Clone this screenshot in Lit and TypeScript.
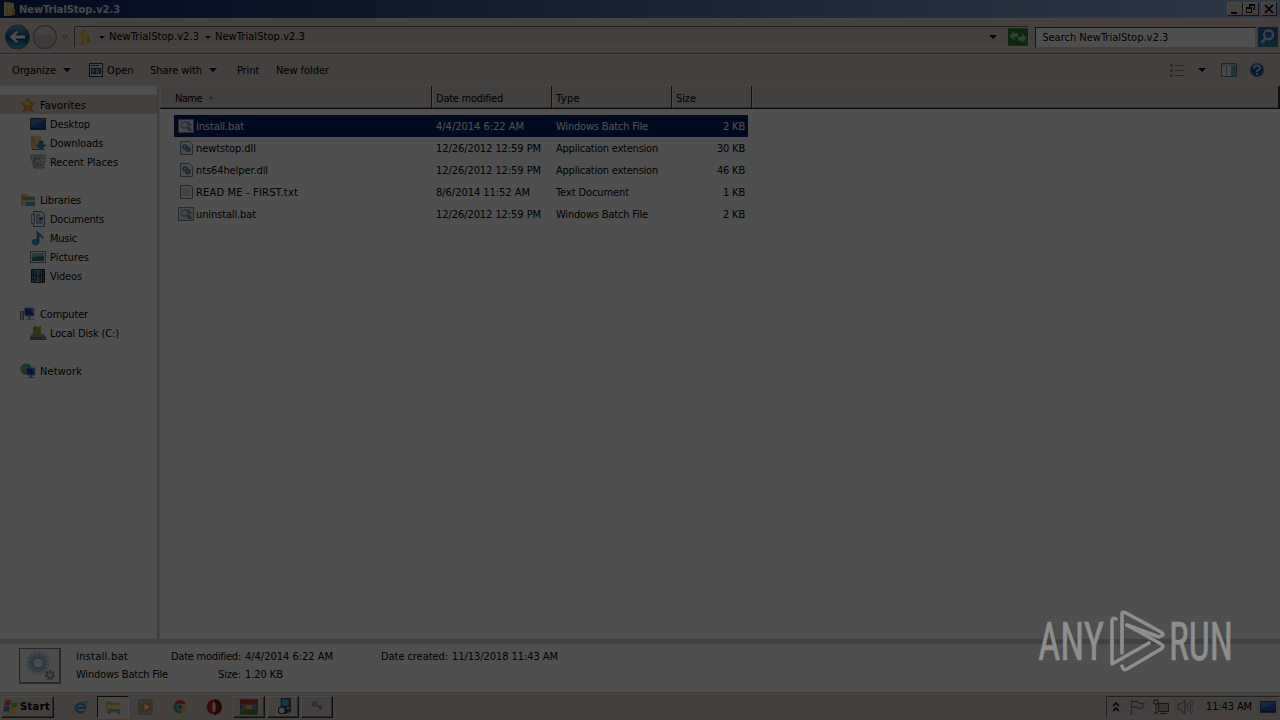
import { LitElement, html, css, svg } from 'lit';
import type { SVGTemplateResult } from 'lit';
import { customElement, property } from 'lit/decorators.js';

// 16x16 shell icons
const icons: Record<string, SVGTemplateResult> = {
  folder: svg`<path d="M3 1h6l1 1v13H3z" fill="#c5a748"/><path d="M7 2h6v12l-5 1-1-2z" fill="#dfc975"/><path d="M3 1h3v13l-3 1z" fill="#e0ce85"/><path d="M11 8h3v6h-3z" fill="#c4a03e"/>`,
  star: svg`<path d="M8 1l2.1 4.6 5 .6-3.7 3.4 1 5L8 12.1l-4.4 2.5 1-5L.9 6.2l5-.6z" fill="#f0a72c" stroke="#b3701a" stroke-width=".8"/><path d="M8 3l1.4 3.4L8 9 4 7z" fill="#ffd567"/>`,
  desktop: svg`<rect x=".5" y="2.5" width="15" height="11" fill="#2456b5" stroke="#384763"/><path d="M1 9c5 1 9-4 14-5V3H1z" fill="#3f7fc4"/><path d="M1 12h14v1H1z" fill="#152a58"/>`,
  downloads: svg`<path d="M1 1h6v13H1z" fill="#e0bd60"/><path d="M5 1h6v13l-6 1z" fill="#e9d48a"/><path d="M9 6h4v4h3l-5 5-5-5h3z" fill="#2e8bc0" stroke="#1a5f8d" stroke-width=".6"/><path d="M2 14h13v1H2z" fill="#3d7c9d"/>`,
  recent: svg`<path d="M1 1h8v5H4l2 8H4L2 6H1z" fill="#ccd3d6" stroke="#71838b" stroke-width=".8"/><path d="M5 5h9v9H5z" fill="#cbd3d6" stroke="#71838b" stroke-width=".8"/><path d="M10 1h5v7h-5z" fill="#e2e5e6" stroke="#71838b" stroke-width=".8"/><path d="M6 9h3M6 11h6M11 4h3M3 4h4" stroke="#536b78"/>`,
  libraries: svg`<path d="M1 2h6l1 2h6v9H1z" fill="#dcb95a"/><path d="M3 5h12v7H3z" fill="#5fa9b3"/><path d="M2 8h13l-1 6H1z" fill="#e4cd80"/><path d="M6 10h9v4H6z" fill="#57a0ba"/>`,
  documents: svg`<path d="M3.500 .5h8l3 3v12h-11z" fill="#eef4f8" stroke="#5f7686"/><path d="M1.500 3.500h3v9h-3z" fill="#dce9f2" stroke="#7f95a5"/><path d="M6 4h4M6 6h3M6 8h2M6 10h6M6 12h6" stroke="#4d6d88"/><path d="M9 6h4v3H9z" fill="#436b99"/>`,
  music: svg`<path d="M7 1c1 3 6 3 6 8-1-2-2-3-4-3v6a3.500 3 0 1 1-2-2.500z" fill="#2f84c9" stroke="#195a94" stroke-width=".6"/><circle cx="5" cy="12" r="3" fill="#36a1dc"/>`,
  pictures: svg`<rect x=".5" y="2.500" width="15" height="11" fill="#f1f5f6" stroke="#75848c"/><path d="M2 4h12v8H2z" fill="#78bade"/><path d="M2 9c4-2 7-1 12-2v5H2z" fill="#2f766e"/>`,
  videos: svg`<rect x="1" y="1" width="14" height="14" fill="#1e2833"/><path d="M4 2h8v5H4zM4 8h8v6H4z" fill="#6f9ec0"/><path d="M2.500 2v13M13.500 2v13" stroke="#b4c0c8" stroke-dasharray="1 1"/><path d="M5 3h2v4h2V3h2v10H9V9H7v4H5z" fill="#315a7b"/>`,
  computer: svg`<path d="M.5 5.500h3v8h-3z" fill="#b7c3cc" stroke="#68777f"/><path d="M4 2h10v8H5z" fill="#1c3fae" stroke="#a8b6cb"/><path d="M10 3h4v6z" fill="#6290dc"/><path d="M8 10h3v3H8zM6 13h8v1H6z" fill="#a9b3b8"/>`,
  disk: svg`<path d="M2 9h12l2 3v3H0v-3z" fill="#8d9c98"/><path d="M0 12h16v3H0z" fill="#5c706a"/><path d="M3 2c3-2 5 1 8-1v8c-3 2-5-1-8 1z" fill="#a8a838"/><path d="M3 2c2-1 3-1 4 0v3H3z" fill="#c5853b"/><path d="M12 13h3v1h-3z" fill="#75d857"/>`,
  network: svg`<circle cx="6" cy="6" r="5.500" fill="#2d95b0"/><path d="M2 3c3-3 5-2 6 0S4 5 5 8s-3 1-4-1z" fill="#62b97a"/><path d="M6 5h9v7H7z" fill="#2038b4" stroke="#8395cc"/><path d="M12 6h3v4z" fill="#6689dd"/><path d="M10 12h2v2h2v1H8v-1h2z" fill="#7b8894"/>`,
  bat: svg`<rect x=".5" y="1.500" width="15" height="13" fill="#dfe4e8" stroke="#7b8790"/><circle cx="6.500" cy="7" r="3" fill="none" stroke="#7f9db1" stroke-width="2" stroke-dasharray="1.500 .7"/><path d="M10 4l3 4M9 9l5 4" stroke="#68879b" stroke-width="1.500"/><circle cx="11" cy="11" r="1.500" fill="none" stroke="#68879b"/>`,
  dll: svg`<path d="M2.500 1.500h9l3 3v10h-12z" fill="#eaf0f4" stroke="#718492"/><circle cx="7" cy="7" r="2" fill="#9dc0d6" stroke="#3d83b0" stroke-width="1.300"/><circle cx="10" cy="9.500" r="2" fill="#9ab1c0" stroke="#4b7895" stroke-width="1.300"/>`,
  txt: svg`<path d="M2.500 1.500h10l2 2v11h-12z" fill="#f1f1f1" stroke="#777"/><path d="M4 5h8M4 7h8M4 9h8M4 11h8" stroke="#bcbcbc"/>`,
  open: svg`<rect x="1.500" y="1.500" width="13" height="13" fill="#e0e3e8" stroke="#202d3d"/><path d="M3 3h8v1H3z" fill="#1f4f9a"/><path d="M3 6h10v6H3z" fill="#263f70"/><path d="M4 8h3M8 8h2M11 8h1M4 10h2M8 10h3" stroke="#fff"/>`,
  go: svg`<path d="M0 1h16v14H0z" fill="#23822a"/><path d="M1 7l4-4v2h3v3H5v3zM15 9l-4 4v-2H8V8h3V5z" fill="#a3cf9b"/>`,
  search: svg`<path d="M0 0h18v18H0z" fill="#2a61ad"/><path d="M0 12h18v6H0z" fill="#26839c"/><circle cx="9.500" cy="7" r="4" fill="#3f66c8" stroke="#c4d2e6" stroke-width="2"/><path d="M7 10l-4 4" stroke="#c4d2e6" stroke-width="2.500"/>`,
  view: svg`<path d="M1 2h3v3H1zM1 7h3v3H1zM1 12h3v3H1z" fill="#8b949d"/><path d="M6 3.500h9M6 8.500h9M6 13.500h9" stroke="#737b84"/>`,
  pane: svg`<path d="M.5 1.500h15v13H.5z" fill="#e4e7e8" stroke="#5e7280"/><path d="M1 2h14v2H1z" fill="#afc1cb"/><path d="M11 4h4v10h-4z" fill="#58aabb"/><path d="M10.500 4v10M5.500 4v10" stroke="#8b9ba5"/>`,
  ie: svg`<circle cx="8.500" cy="9" r="4.500" fill="none" stroke="#2f8fd0" stroke-width="2.600"/><path d="M5 9h8" stroke="#2f8fd0" stroke-width="2"/><path d="M9.500 10.200h5v2h-4z" fill="#d8cfc6"/><path d="M2 15C-1 12 8 2 15 2c1 1 0 3-1 4 1-3-3-2-6 0-4 3-7 6-6 9z" fill="#5aa9d8"/>`,
  explorer: svg`<path d="M1 2h5l1 2h8v10H1z" fill="#d9bb57"/><path d="M2 6h13v8H2z" fill="#f2dd8c"/><path d="M3 10h12v5h-3v-2H6v2H3z" fill="#64aacb"/>`,
  player: svg`<path d="M1 1h13v14H1z" fill="#b2b8b9" stroke="#7c8789"/><circle cx="8" cy="8" r="5" fill="#e78b1d"/><path d="M6.500 5l5 3-5 3z" fill="#fff"/>`,
  chrome: svg`<circle cx="8" cy="8" r="6.500" fill="#35a34b"/><path d="M2.400 4.700A6.500 6.500 0 0 1 14 5H8z" fill="#da3c2e"/><path d="M14 5a6.500 6.500 0 0 1-6 9.500L11 8 9 5z" fill="#efc22f"/><circle cx="8" cy="8" r="3" fill="#3b7cd9" stroke="#ccc"/>`,
  opera: svg`<circle cx="8" cy="8" r="7.500" fill="#c91f26"/><path d="M8 0a7.500 7.500 0 0 1 0 16z" fill="#911219"/><ellipse cx="8" cy="8" rx="1.700" ry="5" fill="#e1d9d9"/>`,
  books: svg`<path d="M0 1h16v5H0z" fill="#cf342c"/><path d="M0 6h16v4H0z" fill="#285aad"/><path d="M0 10h16v5H0z" fill="#3c963f"/><path d="M6 1h4v14H6z" fill="#9c5c42"/><path d="M5 6h6v4H5z" fill="#d9bb5b"/><path d="M2 6v4M4 6v4M12 6v4M14 6v4" stroke="#c99b86"/>`,
  installer: svg`<path d="M6 0h9v12l-4 2H6z" fill="#3b444c"/><path d="M7 1h6v6H7z" fill="#3cb2e8"/><path d="M1 8h4v7H1z" fill="#ddd"/><circle cx="7" cy="11" r="3" fill="#e5e9ea" stroke="#222"/><path d="M11 9h3M2 15h9" stroke="#e3e3e3"/>`,
  tool: svg`<path d="M3 3l4-1 2 3-2 3-4-1zM8 7l4-1 2 3-3 2z" fill="#858b8e"/><path d="M9 9l2 6 1-1-2-6z" fill="#bcc1be"/><path d="M4 4l3 2" stroke="#d6d9d7"/>`,
  start: svg`<path d="M2 2c2-2 4-1 6 0L7 7C5 6 3 6 1 7z" fill="#e75024"/><path d="M9 3c2 1 4 1 6 0l-1 5c-2 1-4 1-6 0z" fill="#6fb73b"/><path d="M1 8c2-1 4-1 6 0l-1 5c-2-1-4-1-6 0z" fill="#3a78d0"/><path d="M8 9c2 1 4 1 6 0l-1 5c-2 1-4 1-6 0z" fill="#f5c431"/>`,
  flag: svg`<path d="M2.500 1v15M3 2.500h6l1 2h5l-2 5H9L8 8H3" fill="none" stroke="#777" stroke-width="1.300"/>`,
  net: svg`<path d="M5.500 4.500h10v8h-10zM7 14.500h7" fill="#aaa" stroke="#444"/><path d="M1 1h4v4H1zM3 5v10M1 14h4" fill="none" stroke="#444"/>`,
  sound: svg`<path d="M1 5h3l4-4v14l-4-4H1z" fill="#c9c9c9" stroke="#666"/><path d="M10 5q2 3 0 6M12 3q4 5 0 10M14 1q5 7 0 14" fill="none" stroke="#777"/>`,
};

@customElement('shell-icon')
export class ShellIcon extends LitElement {
  @property() name = '';
  @property({ type: Number }) size = 16;

  static styles = css`
    :host { display: block; flex: none; }
    svg { display: block; }
  `;

  render() {
    return html`<svg width=${this.size} height=${this.size} viewBox=${this.name === 'search' ? '0 0 18 18' : '0 0 16 16'}>${icons[this.name]}</svg>`;
  }
}

// A label whose tracking is adjusted to fill a known width.
@customElement('fit-label')
export class FitLabel extends LitElement {
  @property() text = '';
  @property({ type: Number }) w = 0;

  static styles = css`
    :host { display: block; flex: none; white-space: pre; }
    span { display: inline-block; }
  `;

  firstUpdated() {
    const span = this.renderRoot.querySelector('span')!;
    const gap = (this.w - span.getBoundingClientRect().width) / this.text.length;
    span.style.letterSpacing = `${gap}px`;
  }

  render() {
    return html`<span>${this.text}</span>`;
  }
}

const label = (text: string, w: number, cls = '') => html`<fit-label class=${cls} .text=${text} .w=${w}></fit-label>`;
const icon = (name: string, size = 16) => html`<shell-icon .name=${name} .size=${size}></shell-icon>`;

const groups: [string, string, number][][] = [
  [['star', 'Favorites', 46], ['desktop', 'Desktop', 40], ['downloads', 'Downloads', 53], ['recent', 'Recent Places', 68]],
  [['libraries', 'Libraries', 41], ['documents', 'Documents', 54], ['music', 'Music', 27], ['pictures', 'Pictures', 39], ['videos', 'Videos', 32]],
  [['computer', 'Computer', 48], ['disk', 'Local Disk (C:)', 69]],
  [['network', 'Network', 42]],
];

const files: [string, string, number, string, number, string, number, string, number][] = [
  ['bat', 'install.bat', 48, '4/4/2014 6:22 AM', 88, 'Windows Batch File', 92, '2 KB', 22],
  ['dll', 'newtstop.dll', 60, '12/26/2012 12:59 PM', 105, 'Application extension', 102, '30 KB', 28],
  ['dll', 'nts64helper.dll', 72, '12/26/2012 12:59 PM', 105, 'Application extension', 102, '46 KB', 28],
  ['txt', 'READ ME - FIRST.txt', 102, '8/6/2014 11:52 AM', 94, 'Text Document', 73, '1 KB', 22],
  ['bat', 'uninstall.bat', 60, '12/26/2012 12:59 PM', 105, 'Windows Batch File', 92, '2 KB', 22],
];

@customElement('app-root')
export class AppRoot extends LitElement {
  static styles = css`
    :host {
      display: flex;
      flex-direction: column;
      position: relative;
      width: 1280px;
      height: 720px;
      overflow: hidden;
      background: #d8cec6;
      color: #000;
      font: 11px/16px 'DejaVu Sans Condensed', 'DejaVu Sans', sans-serif;
      font-stretch: condensed;
    }
    * { box-sizing: border-box; }
    .title fit-label, .query fit-label, .commands fit-label, .node fit-label, .file fit-label { padding-top: 2px; }
    .title {
      display: flex;
      align-items: center;
      height: 18px;
      flex: none;
      padding: 0 3px 0 1px;
      gap: 2px;
      color: #e6e6e6;
      font-weight: bold;
      background: linear-gradient(90deg, #0a246a, #96b8de);
    }
    .spacer { flex: 1; }
    .captions { display: flex; }
    .caption {
      width: 16px;
      height: 14px;
      background: #d8cec6;
      border: 1px solid;
      border-color: #eee #404040 #404040 #eee;
    }
    .caption svg { display: block; }
    .address {
      display: flex;
      align-items: center;
      height: 36px;
      flex: none;
      padding: 2px 2px 0 4px;
      border-top: 1px solid #e6e2dc;
      border-bottom: 1px solid #85827c;
    }
    .nav { display: block; flex: none; }
    .path {
      display: flex;
      align-items: center;
      height: 22px;
      width: 956px;
      margin-left: 4px;
      padding-left: 1px;
      border: 1px solid;
      border-color: #69665f #e4e0da #e4e0da #69665f;
    }
    .tri {
      width: 0;
      height: 0;
      border: 4px solid transparent;
      border-top-color: #000;
      border-bottom: 0;
      flex: none;
    }
    .tri.small { border-width: 3px 3px 0; }
    .path .first { margin: 0 4px 0 7px; }
    .path .second { margin: 0 4px 0 6px; }
    .path .drop { margin-right: 11px; }
    .query {
      display: flex;
      align-items: center;
      width: 221px;
      height: 21px;
      margin: 0 2px 0 6px;
      padding-left: 6px;
      background: #fff;
      border: 1px solid;
      border-color: #404040 #d4d0c8 #d4d0c8 #404040;
    }
    .commands {
      display: flex;
      align-items: center;
      height: 32px;
      flex: none;
      padding: 0 15px 0 12px;
      border-top: 1px solid #e8e4de;
      border-bottom: 1px solid #e3dfd9;
    }
    .organize-tri { margin: 0 17px 0 7px; }
    .open-label { margin: 0 16px 0 3px; }
    .share-tri { margin: 0 20px 0 7px; }
    .print { margin-right: 17px; }
    .view-tri { margin: 0 15px 0 13px; }
    .help { display: block; margin-left: 12px; }
    .body { display: flex; height: 553px; flex: none; background: #fff; }
    .sidebar { width: 157px; padding-top: 9px; }
    .group { margin-bottom: 19px; }
    .node {
      display: flex;
      align-items: center;
      gap: 4px;
      height: 19px;
      padding-left: 30px;
    }
    .node.head { padding-left: 20px; }
    .node.current { background: #d8cec6; }
    .splitter { width: 3px; background: #c9c7c4; border-right: 1px solid #e2e0dd; }
    .list { flex: 1; }
    .columns {
      display: flex;
      height: 23px;
      background: #d6cfc9;
      border-bottom: 1px solid #202020;
      box-shadow: inset 0 -1px #a09d97;
    }
    .column {
      display: flex;
      align-items: center;
      padding-left: 3px;
      border-left: 1px solid #e8e4de;
      border-right: 1px solid #303030;
    }
    .column fit-label { padding-top: 3px; }
    .column.name { width: 272px; padding-left: 14px; gap: 6px; }
    .column.date, .column.type { width: 120px; }
    .column.size { width: 80px; }
    .column.rest { flex: 1; border-right-width: 2px; }
    .sort { border: 3px solid transparent; border-top: 0; border-bottom-color: #85827c; }
    .files { padding: 6px 0 0 14px; }
    .file {
      display: flex;
      align-items: center;
      width: 574px;
      height: 22px;
      padding: 0 3px 0 4px;
    }
    .file.selected { background: #001f68; color: #fff; }
    .file shell-icon { margin-right: 2px; }
    .cell.name { width: 240px; }
    .cell.date { width: 120px; }
    .cell.type { width: 130px; }
    .cell.bytes { display: flex; flex: 1; justify-content: flex-end; }
    .details {
      display: flex;
      height: 54px;
      flex: none;
      padding: 4px 0 0 19px;
      background: #fff;
      border-top: 5px solid #d2d0cd;
      border-bottom: 1px solid #bdbab5;
    }
    .thumb {
      width: 42px;
      height: 36px;
      margin-right: 15px;
      background: #f2f4f5;
      border: 1px solid #777;
      border-right: 2px solid #888;
      border-bottom: 2px solid #888;
    }
    .info { display: flex; flex-direction: column; gap: 2px; padding-top: 1px; }
    .info.what { width: 95px; }
    .info.when { width: 210px; }
    .pair { display: flex; gap: 4px; }
    .pair.indent { padding-left: 47px; }
    .taskbar {
      display: flex;
      align-items: center;
      flex: 1;
      padding: 0 0 0 1px;
      border-top: 1px solid #e8e5df;
    }
    .start, .task {
      display: flex;
      align-items: center;
      height: 22px;
      border: 1px solid;
      border-color: #eee #303030 #303030 #eee;
      box-shadow: inset -1px -1px #85827c;
    }
    .start { width: 53px; padding-left: 1px; gap: 1px; font-weight: bold; }
    .quick { display: flex; align-items: center; padding-left: 18px; }
    .quick .item { width: 34px; display: flex; }
    .quick .item.last { width: 27px; }
    .quick .active {
      justify-content: center;
      align-items: center;
      width: 32px;
      height: 22px;
      margin: 0 9px 0 -9px;
      background: #e8e4de;
      border: 1px solid;
      border-color: #202020 #fff #fff #202020;
    }
    .task { width: 32px; justify-content: center; margin-right: 2px; }
    .tray {
      display: flex;
      align-items: center;
      width: 174px;
      height: 22px;
      padding-left: 4px;
      border: 1px solid;
      border-color: #706d68 #ddd #ddd #706d68;
    }
    .tray shell-icon { margin-left: 8px; }
    .tray .clock { margin: 0 8px 0 13px; }
    .tray .show { margin-left: 0; }
    .chevron { display: block; }
    .shade { position: absolute; inset: 0; background: rgba(0, 0, 0, 0.69); }
    .brand { position: absolute; left: 1030px; top: 600px; }
    .brand text { font-family: Roboto, sans-serif; font-size: 53px; font-weight: 400; }
  `;

  private renderTitle() {
    return html`
      <div class="title">
        ${icon('folder')}
        ${label('NewTrialStop.v2.3', 101)}
        <span class="spacer"></span>
        <div class="captions">
          <div class="caption"><svg width="14" height="12"><path d="M3 9h6v2H3z"/></svg></div>
          <div class="caption"><svg width="14" height="12"><path d="M5.500 4V1.500h5v5H9M2.500 4.500h5v5h-5z" fill="none" stroke="#000"/><path d="M5 1h6v2H5zM2 4h6v2H2z"/></svg></div>
        </div>
        <div class="caption"><svg width="14" height="12"><path d="M3 2l8 8M11 2l-8 8" stroke="#000" stroke-width="1.700"/></svg></div>
      </div>
    `;
  }

  private renderAddress() {
    return html`
      <div class="address">
        <svg class="nav" width="66" height="28" viewBox="0 0 66 28">
          <defs>
            <linearGradient id="back" x2="0" y2="1">
              <stop stop-color="#739fb9"/><stop offset=".45" stop-color="#1b5f8d"/>
              <stop offset=".55" stop-color="#0b4576"/><stop offset="1" stop-color="#37b6de"/>
            </linearGradient>
          </defs>
          <circle cx="13.500" cy="14" r="12" fill="url(#back)" stroke="#4d6679"/>
          <path d="M5.500 14l7-6 1.500 1.500L11 12.500h10v3H11l3 3-1.500 1.500z" fill="#fff"/>
          <circle cx="41" cy="14" r="11.500" fill="#c5bfb8" stroke="#96928c" stroke-width="1.500"/>
          <path d="M31 13a10 9 0 0 1 20 0q-10-4-20 0z" fill="#d8d4ce"/>
          <path d="M57.500 12.500h6l-3 4z" fill="#d8cec6" stroke="#96938d"/>
        </svg>
        <div class="path">
          ${icon('folder')}
          <i class="tri small first"></i>
          ${label('NewTrialStop.v2.3', 90)}
          <i class="tri small second"></i>
          ${label('NewTrialStop.v2.3', 90)}
          <span class="spacer"></span>
          <i class="tri drop"></i>
          ${icon('go', 20)}
        </div>
        <div class="query">${label('Search NewTrialStop.v2.3', 126)}</div>
        ${icon('search', 20)}
      </div>
    `;
  }

  private renderCommands() {
    return html`
      <div class="commands">
        ${label('Organize', 44)}
        <i class="tri organize-tri"></i>
        ${icon('open')}
        ${label('Open', 27, 'open-label')}
        ${label('Share with', 52)}
        <i class="tri share-tri"></i>
        ${label('Print', 22, 'print')}
        ${label('New folder', 53)}
        <span class="spacer"></span>
        ${icon('view')}
        <i class="tri view-tri"></i>
        ${icon('pane')}
        <svg class="help" width="16" height="16">
          <circle cx="8" cy="8" r="7" fill="#2850a8" stroke="#8d9cbd"/>
          <path d="M5 6.500c0-4 6-4 6-.5 0 2-3 1.500-3 4M8 11v2" fill="none" stroke="#d6dbe6" stroke-width="1.800"/>
        </svg>
      </div>
    `;
  }

  private renderBody() {
    return html`
      <div class="body">
        <div class="sidebar">
          ${groups.map((group, g) => html`
            <div class="group">
              ${group.map(([name, text, w], i) => html`
                <div class="node ${i === 0 ? 'head' : ''} ${g + i === 0 ? 'current' : ''}">${icon(name)}${label(text, w)}</div>
              `)}
            </div>
          `)}
        </div>
        <div class="splitter"></div>
        <div class="list">
          <div class="columns">
            <div class="column name">${label('Name', 27)}<i class="sort"></i></div>
            <div class="column date">${label('Date modified', 67)}</div>
            <div class="column type">${label('Type', 24)}</div>
            <div class="column size">${label('Size', 20)}</div>
            <div class="column rest"></div>
          </div>
          <div class="files">
            ${files.map(([type, name, nw, date, dw, kind, kw, size, sw], i) => html`
              <div class="file ${i === 0 ? 'selected' : ''}">
                ${icon(type)}
                <div class="cell name">${label(name, nw)}</div>
                <div class="cell date">${label(date, dw)}</div>
                <div class="cell type">${label(kind, kw)}</div>
                <div class="cell bytes">${label(size, sw)}</div>
              </div>
            `)}
          </div>
        </div>
      </div>
    `;
  }

  private renderDetails() {
    return html`
      <div class="details">
        <div class="thumb">
          <svg width="39" height="33">
            <circle cx="18" cy="14" r="10" fill="none" stroke="#b5cde0" stroke-width="3" stroke-dasharray="2.500 1.400"/>
            <circle cx="18" cy="14" r="7" fill="none" stroke="#a0c0da" stroke-width="4"/>
            <circle cx="18" cy="14" r="5" fill="none" stroke="#7d9fb9"/>
            <circle cx="30" cy="26" r="3.500" fill="#ddd" stroke="#788590" stroke-width="3" stroke-dasharray="2 1"/>
          </svg>
        </div>
        <div class="info what">
          ${label('install.bat', 52)}
          ${label('Windows Batch File', 92)}
        </div>
        <div class="info when">
          <div class="pair">${label('Date modified:', 70)}${label('4/4/2014 6:22 AM', 88)}</div>
          <div class="pair indent">${label('Size:', 23)}${label('1.20 KB', 38)}</div>
        </div>
        <div class="info">
          <div class="pair">${label('Date created:', 67)}${label('11/13/2018 11:43 AM', 106)}</div>
        </div>
      </div>
    `;
  }

  private renderTaskbar() {
    return html`
      <div class="taskbar">
        <div class="start">${icon('start')}${label('Start', 30)}</div>
        <div class="quick">
          <div class="item">${icon('ie')}</div>
          <div class="item active">${icon('explorer')}</div>
          <div class="item">${icon('player')}</div>
          <div class="item">${icon('chrome')}</div>
          <div class="item last">${icon('opera')}</div>
        </div>
        <div class="task">${icon('books', 18)}</div>
        <div class="task">${icon('installer', 18)}</div>
        <div class="task">${icon('tool')}</div>
        <span class="spacer"></span>
        <div class="tray">
          <svg class="chevron" width="10" height="12"><path d="M2 5l3-3 3 3M2 10l3-3 3 3" fill="none" stroke="#000" stroke-width="1.500"/></svg>
          ${icon('flag')}${icon('net')}${icon('sound')}
          ${label('11:43 AM', 46, 'clock')}
          <shell-icon class="show" .name=${'desktop'}></shell-icon>
        </div>
      </div>
    `;
  }

  render() {
    return html`
      ${this.renderTitle()}
      ${this.renderAddress()}
      ${this.renderCommands()}
      ${this.renderBody()}
      ${this.renderDetails()}
      ${this.renderTaskbar()}
      <div class="shade"></div>
      <svg class="brand" width="250" height="100" fill="#8e8e8e">
        <g stroke="#8e8e8e" stroke-width=".7">
          <text x="8" y="59.500" textLength="66" lengthAdjust="spacingAndGlyphs">ANY</text>
          <text x="139" y="59.500" textLength="64" lengthAdjust="spacingAndGlyphs">RUN</text>
        </g>
        <g fill="none" stroke="#8e8e8e" stroke-width="3.600" stroke-linejoin="round" stroke-linecap="round">
          <path d="M86 19q-4-2-4 2v43L119 43"/>
          <path d="M92 53V14q0-3 4-1l35 19q4 3 0 4l-2 1L97 25"/>
          <path d="M92 66q1 5 5 3l34-20q4-3 0-5L97 25"/>
        </g>
      </svg>
    `;
  }
}
